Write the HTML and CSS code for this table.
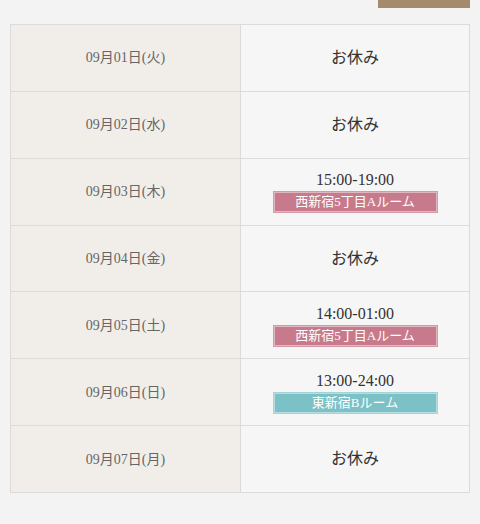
FILE: index.html
```html
<!DOCTYPE html>
<html lang="ja">
<head>
  <meta charset="UTF-8">
  <meta name="viewport" content="width=device-width, initial-scale=1.0">
  <title>出勤スケジュール</title>
  <link rel="stylesheet" href="styles.css">
</head>
<body>
  <!-- top tab -->
  <div class="top-bar">
    <span class="tab"></span>
  </div>

  <!-- schedule -->
  <table class="schedule">
    <tr>
      <th>09月01日(火)</th>
      <td><span class="off">お休み</span></td>
    </tr>
    <tr>
      <th>09月02日(水)</th>
      <td><span class="off">お休み</span></td>
    </tr>
    <tr>
      <th>09月03日(木)</th>
      <td>
        <div class="time">15:00-19:00</div>
        <div class="room room-a">西新宿5丁目Aルーム</div>
      </td>
    </tr>
    <tr>
      <th>09月04日(金)</th>
      <td><span class="off">お休み</span></td>
    </tr>
    <tr>
      <th>09月05日(土)</th>
      <td>
        <div class="time">14:00-01:00</div>
        <div class="room room-a">西新宿5丁目Aルーム</div>
      </td>
    </tr>
    <tr>
      <th>09月06日(日)</th>
      <td>
        <div class="time">13:00-24:00</div>
        <div class="room room-b">東新宿Bルーム</div>
      </td>
    </tr>
    <tr>
      <th>09月07日(月)</th>
      <td><span class="off">お休み</span></td>
    </tr>
  </table>
</body>
</html>
```

FILE: styles.css
```css
body {
  margin: 0;
  background: #f3f3f3;
  font-family: "Liberation Serif", "Noto Sans CJK JP", serif;
}

.top-bar {
  display: flex;
  justify-content: flex-end;
  padding: 0 10px;
  height: 8px;
}

.tab {
  width: 92px;
  height: 8px;
  background: #a58b6b;
}

.schedule {
  width: 460px;
  margin: 16px 10px 0;
  border-collapse: collapse;
  table-layout: fixed;
}

.schedule th,
.schedule td {
  padding: 0;
  border: 1px solid #dcdbd9;
  text-align: center;
  vertical-align: middle;
}

.schedule th {
  width: 229px;
  height: 62.86px;
  padding-bottom: 3px;
  background: #f1eeea;
  color: #666;
  font-size: 14px;
  font-weight: normal;
}

.schedule td {
  height: 65.86px;
  background: #f6f6f6;
  color: #333;
}

.off {
  display: inline-block;
  font-size: 16px;
  line-height: 20px;
}

.time {
  font-size: 16px;
  line-height: 20px;
}

.room {
  width: 163px;
  margin: 1px auto 0;
  line-height: 20px;
  color: #fff;
  font-size: 13px;
}

/* thin light line inside the badge edge */
.room-a {
  background: #c77a8c;
  border: 1px solid #d59aa8;
  box-shadow: inset 0 0 0 1px rgba(255, 255, 255, 0.45);
}

.room-b {
  background: #7cc1c6;
  border: 1px solid #a3d4d7;
  box-shadow: inset 0 0 0 1px rgba(255, 255, 255, 0.45);
}
```
